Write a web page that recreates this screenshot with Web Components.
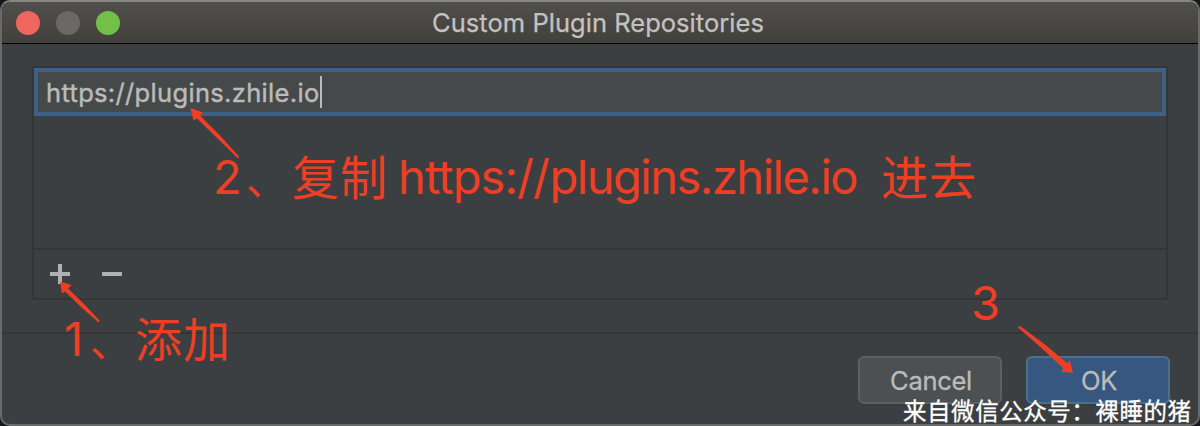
<!DOCTYPE html>
<html lang="zh">
<head>
<meta charset="utf-8">
<title>Custom Plugin Repositories</title>
<style>
html,body{margin:0;width:1200px;height:426px;overflow:hidden;background:#15181d}
body{font-family:Inter,"Noto Sans CJK SC",sans-serif}
</style>
</head>
<body>
<plugin-dialog>
  <title-bar slot="title">Custom Plugin Repositories</title-bar>
  <repo-list>
    <repo-field>https://plugins.zhile.io</repo-field>
  </repo-list>
  <dialog-button slot="actions" style="--spacing:-.3px">Cancel</dialog-button>
  <dialog-button slot="actions" primary style="--spacing:-.4px">OK</dialog-button>
</plugin-dialog>
<step-notes></step-notes>
<script>
class Base extends HTMLElement{
  constructor(){super();this.attachShadow({mode:'open'}).innerHTML=this.constructor.markup}
}
customElements.define('plugin-dialog',class extends Base{static markup=`
<style>
:host{display:flex;flex-direction:column;box-sizing:border-box;width:1200px;height:426px;border:2px solid #696b6b;border-top-color:#868684;border-radius:10px;background:#3c3f41;overflow:hidden}
main{height:290px;box-sizing:border-box;padding:22px 30px 0;border-bottom:2px solid #353535;flex:none}
footer{display:flex;justify-content:flex-end;gap:24px;padding:22px 28px 0}
</style>
<slot name="title"></slot><main><slot></slot></main><footer><slot name="actions"></slot></footer>`});
customElements.define('title-bar',class extends Base{static markup=`
<style>
:host{display:grid;grid-template-columns:1fr auto 1fr;align-items:center;box-sizing:border-box;height:42px;flex:none;padding-left:14px;padding-right:18px;background:linear-gradient(#514f4c,#42403d);border-bottom:1px solid #000;color:#c4c2c0;font-size:25.5px;line-height:40px}
.lights{display:flex;gap:16px}
i{width:24px;height:24px;border-radius:50%;background:#ee665d}
i:nth-child(2){background:#6a6968}i:nth-child(3){background:#73c048}
span{letter-spacing:.03px;-webkit-text-stroke:.25px #c4c2c0}
</style>
<div class="lights"><i></i><i></i><i></i></div>
<span><slot></slot></span><b></b>`});
customElements.define('repo-list',class extends Base{static markup=`
<style>
:host{display:flex;flex-direction:column;box-sizing:border-box;height:234px;border:2px solid #353535}
.rows{flex:1}
.tools{display:flex;align-items:center;gap:32px;height:48px;padding-left:16px;border-top:2px solid #353535}
svg{display:block;fill:#afb1b3}
</style>
<div class="rows"><slot></slot></div>
<div class="tools"><svg width="20" height="20"><path d="M8 0h4v8h8v4h-8v8H8v-8H0V8h8z"/></svg><svg width="20" height="20"><path d="M0 8h20v4H0z"/></svg></div>`});
customElements.define('repo-field',class extends Base{static markup=`
<style>
:host{display:flex;align-items:center;box-sizing:border-box;height:48px;border:4px solid #3d6185;background:#45494a;padding-left:8px;color:#bbb;font-size:25.5px;line-height:40px}
span{letter-spacing:.33px;padding-top:2px;-webkit-text-stroke:.4px #bbb}
i{width:2px;height:32px;background:#bbb}
</style>
<span><slot></slot></span><i></i>`});
customElements.define('dialog-button',class extends Base{static markup=`
<style>
:host{display:flex;align-items:center;justify-content:center;box-sizing:border-box;width:144px;height:48px;border:2px solid #5e6060;border-radius:6px;background:#4c5052;color:#bbb;font-size:25.5px;letter-spacing:var(--spacing);box-shadow:0 2px 0 #393b3d;padding:1px 0 0 2px;-webkit-text-stroke:.3px #bbb}
:host([primary]){background:#365880;border-color:#4c708c}
</style><slot></slot>`});
customElements.define('step-notes',class extends Base{static markup=`
<style>
:host{position:absolute;left:0;top:0;width:1200px;height:426px;pointer-events:none}
svg{display:block;fill:#ee3f24;font-size:47px}
text{white-space:pre}
.cjk{font-family:"Noto Sans CJK SC",sans-serif;font-size:47px}
.comma{font-size:41px}
.mark{fill:#fff;font-family:"Noto Sans CJK SC",sans-serif;font-size:23.5px;stroke:#fff;stroke-width:.3px}
</style>
<svg width="1200" height="426" viewBox="0 0 1200 426">
<path d="M190.500 108L203 112.500L200 115.500L219.500 135L239 156.500Q239 158 237.500 158L216 137L197 118.500L193.500 120.500Z"/>
<path d="M60 281.500L71.500 285L68 288.500L84 304L99.500 320.500Q99.500 322 98 322L81 307L65 291.500L62 293.500Z"/>
<path d="M1018 327.500Q1018 326 1020 326L1045 344.500L1067.500 363.500L1070 360.500L1073 373L1060.500 371.500L1063.500 368.500L1041.500 348Z"/>
<text x="213" y="194">2</text><text class="cjk comma" x="246" y="195">、</text><text class="cjk" x="292" y="194.500" textLength="95">复制</text>
<text x="398" y="194"><tspan textLength="152">https://</tspan><tspan x="549.500" textLength="309">plugins.zhile.io</tspan></text><text class="cjk" x="881" y="194.500" textLength="95">进去</text>
<text x="64" y="356">1</text><text class="cjk comma" x="90" y="357">、</text><text class="cjk" x="135" y="357" textLength="95">添加</text>
<text x="971" y="320">3</text>
<text class="mark" x="903" y="420" textLength="288">来自微信公众号：裸睡的猪</text>
</svg>`});
</script>
</body>
</html>
